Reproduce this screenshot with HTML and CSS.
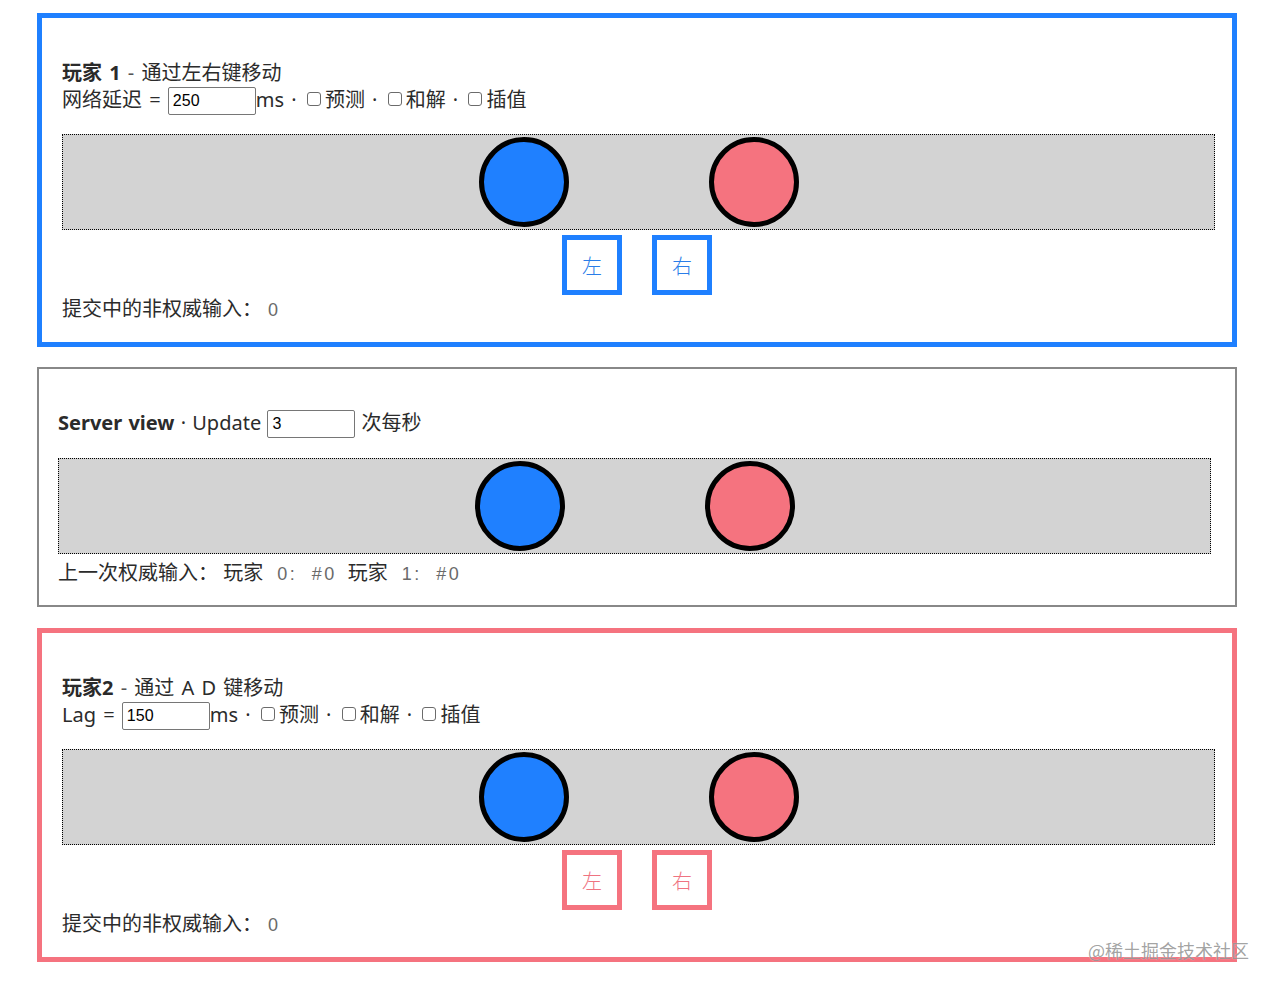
FILE: index.html
```html
<!DOCTYPE html>
<html lang="zh-CN">
<head>
<meta charset="utf-8">
<title>Client-side prediction demo</title>
<link rel="stylesheet" href="styles.css">
</head>
<body>
<div class="page">
  <section class="panel panel-blue">
    <div class="title"><b>玩家 1</b> <span class="dash">-</span> 通过左右键移动</div>
    <div class="controls">网络延迟 = <input class="num" type="text" value="250">ms · <input type="checkbox">预测 · <input type="checkbox">和解 · <input type="checkbox">插值</div>
    <div class="stage">
      <div class="ball ball-blue"></div>
      <div class="ball ball-pink"></div>
    </div>
    <div class="keys">
      <div class="key key-blue">左</div>
      <div class="key key-blue">右</div>
    </div>
    <div class="status">提交中的非权威输入：<span class="mono mono-count">0</span></div>
  </section>

  <section class="panel panel-gray">
    <div class="controls server-title"><b>Server view</b> · Update <input class="num" type="text" value="3"> 次每秒</div>
    <div class="stage">
      <div class="ball ball-blue"></div>
      <div class="ball ball-pink"></div>
    </div>
    <div class="status status-server">上一次权威输入： 玩家<span class="mono">0: #0</span>玩家<span class="mono">1: #0</span></div>
  </section>

  <section class="panel panel-pink">
    <div class="title"><b>玩家2</b> <span class="dash">-</span> 通过 A D 键移动</div>
    <div class="controls">Lag = <input class="num" type="text" value="150">ms · <input type="checkbox">预测 · <input type="checkbox">和解 · <input type="checkbox">插值</div>
    <div class="stage">
      <div class="ball ball-blue"></div>
      <div class="ball ball-pink"></div>
    </div>
    <div class="keys">
      <div class="key key-pink">左</div>
      <div class="key key-pink">右</div>
    </div>
    <div class="status">提交中的非权威输入：<span class="mono mono-count">0</span></div>
  </section>
</div>
<div class="watermark">@稀土掘金技术社区</div>
</body>
</html>
```

FILE: styles.css
```css
html, body {
  margin: 0;
  padding: 0;
  background: #ffffff;
}

body {
  font-family: "Noto Sans", "Noto Sans CJK SC", sans-serif;
  font-size: 20px;
  color: #2b2b2b;
  word-spacing: 2px;
  position: relative;
  min-height: 986px;
}

.page {
  padding: 13px 37px 0 37px;
  display: flex;
  flex-direction: column;
  gap: 20px;
  width: 1200px;
}

.panel {
  box-sizing: border-box;
  width: 1200px;
  padding: 20px 17px 20px 20px;
}

.panel-blue {
  border: 5px solid #1f80ff;
}

.panel-pink {
  border: 5px solid #f5737f;
}

.panel-gray {
  border: 2px solid #888888;
  padding: 20px 20px 19px 19px;
  margin-bottom: 1px;
}

.title {
  margin-top: 22px;
  line-height: 26px;
  height: 26px;
  white-space: nowrap;
}

.title b {
  font-weight: 700;
  color: #2a2a2a;
}

.dash {
  color: #555;
}

.controls {
  height: 28px;
  line-height: 27px;
  white-space: nowrap;
}

.server-title {
  margin-top: 20px;
  word-spacing: 1px;
}

.server-title b {
  font-weight: 700;
}

.num {
  box-sizing: border-box;
  width: 88px;
  height: 28px;
  border: 1px solid #767676;
  border-radius: 2px;
  padding: 1px 4px 0 4px;
  font-family: "Liberation Sans", Arial, sans-serif;
  font-size: 16px;
  word-spacing: 0;
  color: #000;
  vertical-align: middle;
  margin: -2px 0 0 0;
  background: #fff;
}

input[type="checkbox"] {
  -webkit-appearance: none;
  appearance: none;
  box-sizing: border-box;
  width: 14px;
  height: 14px;
  margin: 0 4px 0 3px;
  border: 1px solid #6b6b6b;
  border-radius: 3px;
  background: #fff;
  vertical-align: middle;
  position: relative;
  top: -3px;
}

.stage {
  box-sizing: border-box;
  width: 1153px;
  height: 96px;
  margin-top: 20px;
  background: #d3d3d3;
  border: 1px dotted #000000;
  display: flex;
  justify-content: center;
  align-items: center;
  gap: 140px;
}

.panel-gray .stage {
  margin-top: 21px;
}

.ball {
  box-sizing: border-box;
  width: 90px;
  height: 90px;
  border-radius: 50%;
  border: 5px solid #000;
}

.ball-blue {
  background: #1f80ff;
}

.ball-pink {
  background: #f5737f;
}

.keys {
  width: 1150px;
  margin-top: 5px;
  display: flex;
  justify-content: center;
  gap: 30px;
}

.key {
  box-sizing: border-box;
  width: 60px;
  height: 60px;
  background: #fff;
  display: flex;
  align-items: center;
  justify-content: center;
  font-size: 20px;
  font-weight: 300;
}

.key-blue {
  border: 5px solid #1f80ff;
  color: #2a7de8;
}

.key-pink {
  border: 5px solid #f5737f;
  color: #ef7381;
}

.status {
  margin-top: 1px;
  line-height: 26px;
  height: 26px;
  white-space: nowrap;
  word-spacing: 0;
}

.status-server {
  margin-top: 6px;
}

.mono {
  font-family: "Liberation Sans", Arial, sans-serif;
  font-size: 18px;
  letter-spacing: 2.5px;
  word-spacing: 7px;
  color: #6a6a6a;
  margin-left: 14px;
  margin-right: 11px;
}

.mono-count {
  margin-left: 6px;
  margin-right: 0;
}

.watermark {
  position: absolute;
  left: 1088px;
  top: 937px;
  font-family: "Noto Sans CJK SC", sans-serif;
  font-size: 18px;
  word-spacing: 0;
  color: rgba(110, 110, 110, 0.65);
  text-shadow: 0 0 1px rgba(255, 255, 255, 0.8);
  white-space: nowrap;
}
```
